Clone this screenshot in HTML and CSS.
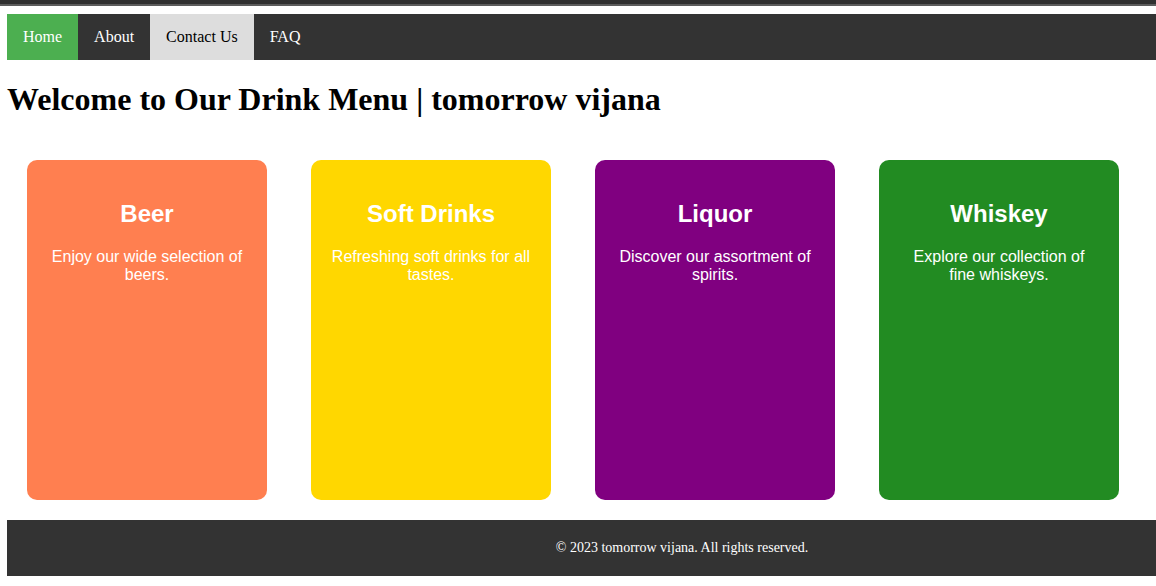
FILE: index.html
```html
<!DOCTYPE html>
<html lang="en">
<head>
<meta charset="utf-8">
<title>Drink Menu</title>
<link rel="stylesheet" href="styles.css">
</head>
<body>
<div class="topstrip"></div>
<div class="viewport">
  <div class="page">
    <nav class="nav">
      <a class="nav-link nav-active" href="#">Home</a>
      <a class="nav-link" href="#">About</a>
      <a class="nav-link nav-hover" href="#">Contact Us</a>
      <a class="nav-link" href="#">FAQ</a>
    </nav>
    <h1 class="title">Welcome to Our Drink Menu | tomorrow vijana</h1>
    <div class="cards">
      <div class="card card-beer">
        <h2 class="card-title">Beer</h2>
        <p class="card-text">Enjoy our wide selection of beers.</p>
      </div>
      <div class="card card-soft">
        <h2 class="card-title">Soft Drinks</h2>
        <p class="card-text">Refreshing soft drinks for all tastes.</p>
      </div>
      <div class="card card-liquor">
        <h2 class="card-title">Liquor</h2>
        <p class="card-text">Discover our assortment of spirits.</p>
      </div>
      <div class="card card-whiskey">
        <h2 class="card-title">Whiskey</h2>
        <p class="card-text">Explore our collection of fine whiskeys.</p>
      </div>
    </div>
    <footer class="footer">&copy; 2023 tomorrow vijana. All rights reserved.</footer>
  </div>
</div>
</body>
</html>
```
FILE: styles.css
```css
html, body {
  margin: 0;
  padding: 0;
  background: #fff;
}
body {
  font-family: "Liberation Serif", "Times New Roman", serif;
  font-size: 16px;
}
.topstrip {
  height: 4px;
  background: #303030;
  border-bottom: 2px solid #5c5c5c;
}
.viewport {
  width: 100%;
  overflow: hidden;
}
.page {
  width: 1350px;
  padding: 8px 0 8px 7px;
}
.nav {
  display: flex;
  background: #333;
}
.nav-link {
  display: block;
  padding: 14px 16px;
  color: #fff;
  text-decoration: none;
  font-size: 16px;
}
.nav-active {
  background: #4CAF50;
}
.nav-hover {
  background: #ddd;
  color: #000;
}
.title {
  font-size: 32px;
  font-weight: bold;
  margin: 21.44px 0;
  color: #000;
}
.cards {
  display: flex;
  gap: 44px;
  padding: 20px;
}
.card {
  width: 200px;
  height: 300px;
  padding: 20px;
  border-radius: 10px;
  color: #fff;
  text-align: center;
  font-family: "Liberation Sans", Arial, sans-serif;
  flex: none;
}
.card-title {
  font-size: 24px;
  font-weight: bold;
  margin: 19.92px 0;
}
.card-text {
  font-size: 16px;
  margin: 16px 0;
}
.card-beer { background: #FF7F50; }
.card-soft { background: #FFD700; }
.card-liquor { background: #800080; }
.card-whiskey { background: #228B22; }
.footer {
  background: #333;
  color: #fff;
  text-align: center;
  padding: 20px;
  font-size: 14px;
}
```
